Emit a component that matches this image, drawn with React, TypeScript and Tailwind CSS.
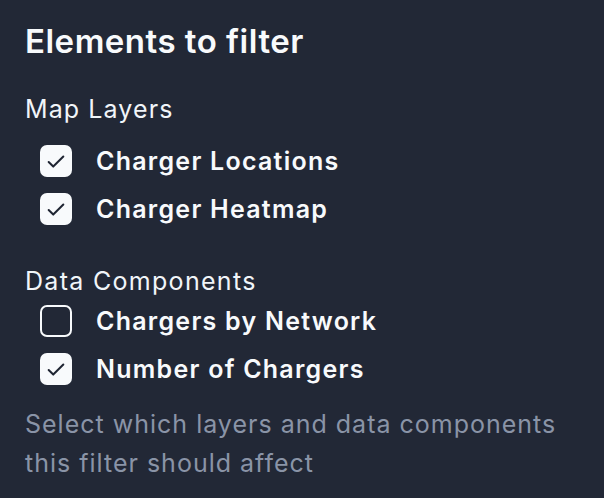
import { Check } from 'lucide-react';

interface Item {
  label: string;
  checked: boolean;
}

const mapLayers: Item[] = [
  { label: 'Charger Locations', checked: true },
  { label: 'Charger Heatmap', checked: true },
];

const dataComponents: Item[] = [
  { label: 'Chargers by Network', checked: false },
  { label: 'Number of Chargers', checked: true },
];

function CheckRow({ item }: { item: Item }) {
  return (
    <label className="flex items-center gap-[24px] h-[48px]">
      {item.checked ? (
        <span className="w-[32px] h-[32px] rounded-[7px] bg-[#f8fafc] flex items-center justify-center shrink-0">
          <Check className="w-[22px] h-[22px] text-[#1f2533] mt-[2px]" strokeWidth={2.2} />
        </span>
      ) : (
        <span className="w-[32px] h-[32px] rounded-[7px] border-2 border-[#f8fafc] shrink-0" />
      )}
      <span className="text-[25px] font-semibold text-[#f8fafc] tracking-[1.25px] leading-[48px]">{item.label}</span>
    </label>
  );
}

export default function App() {
  return (
    <div
      className="w-[604px] h-[498px] bg-[#222836] px-[25px] pt-[21px]"
      style={{ fontFamily: 'Inter, "Noto Sans", sans-serif' }}
    >
      <h2 className="text-[33px] font-semibold text-[#f8fafc] leading-[40px] tracking-[0.5px]">Elements to filter</h2>

      <div className="mt-[32px]">
        <h3 className="text-[25px] text-[#f1f5f9] leading-[32px] tracking-[1.1px]">Map Layers</h3>
        <div className="mt-[12px] pl-[15px]">
          {mapLayers.map((item) => (
            <CheckRow key={item.label} item={item} />
          ))}
        </div>
      </div>

      <div className="mt-[32px]">
        <h3 className="text-[25px] text-[#f1f5f9] leading-[32px] tracking-[1.3px]">Data Components</h3>
        <div className="pl-[15px]">
          {dataComponents.map((item) => (
            <CheckRow key={item.label} item={item} />
          ))}
        </div>
      </div>

      <p className="mt-[12px] w-[560px] text-[25px] leading-[39px] tracking-[1px] text-[#8a94a7]">
        Select which layers and data components this filter should affect
      </p>
    </div>
  );
}
